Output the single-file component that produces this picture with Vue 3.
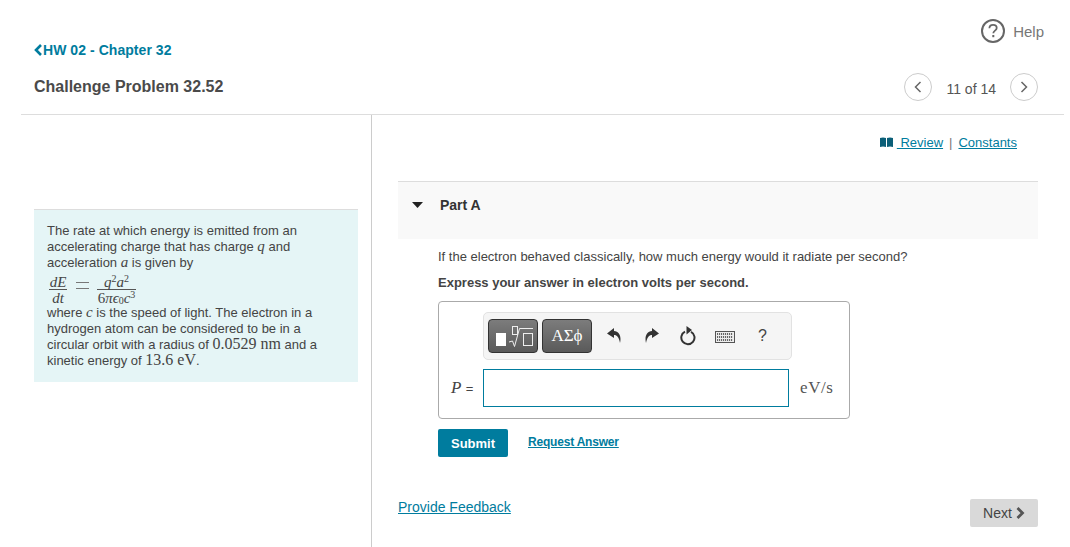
<script setup>
const keyRows = [0, 1, 2]
</script>

<template>
  <div class="page">
    <header class="header">
      <div class="help-row">
        <svg class="help-icon" width="26" height="26" viewBox="0 0 26 26" aria-hidden="true">
          <circle cx="13" cy="13" r="11" fill="none" stroke="#666" stroke-width="2" />
          <path d="M9.4 10.2c0-2.2 1.6-3.4 3.7-3.4s3.6 1.2 3.6 3.1c0 2.7-3.4 2.8-3.4 5.4" fill="none" stroke="#666" stroke-width="1.8" />
          <rect x="12.3" y="17" width="2" height="2.2" fill="#666" />
        </svg>
        <span class="help-text">Help</span>
      </div>
      <a class="back" href="#">
        <svg width="9" height="12" viewBox="0 0 9 12" aria-hidden="true"><path d="M7 1 2 6l5 5" fill="none" stroke="#007c9e" stroke-width="2.6" /></svg>
        <span>HW 02 - Chapter 32</span>
      </a>
      <div class="title-row">
        <h1 class="title">Challenge Problem 32.52</h1>
        <div class="pager">
          <span class="circle">
            <svg width="10" height="14" viewBox="0 0 10 14" aria-hidden="true"><path d="M7.500 2 2.500 7l5 5" fill="none" stroke="#666" stroke-width="1.500" /></svg>
          </span>
          <span class="count">11 of 14</span>
          <span class="circle">
            <svg width="10" height="14" viewBox="0 0 10 14" aria-hidden="true"><path d="M2.500 2l5 5-5 5" fill="none" stroke="#666" stroke-width="1.500" /></svg>
          </span>
        </div>
      </div>
    </header>

    <main class="body">
      <aside class="left">
        <div class="intro">
          <div>The rate at which energy is emitted from an</div>
          <div>accelerating charge that has charge <i class="m">q</i> and</div>
          <div>acceleration <i class="m">a</i> is given by</div>
          <div class="eq">
            <span class="frac small">
              <span class="num"><i>dE</i></span>
              <span class="den"><i>dt</i></span>
            </span>
            <svg class="equals" width="13" height="7" viewBox="0 0 13 7" aria-hidden="true"><path d="M0 .5h13M0 6.500h13" stroke="#777" stroke-width="1" /></svg>
            <span class="frac wide">
              <span class="num"><i>q</i><sup>2</sup><i>a</i><sup>2</sup></span>
              <span class="den">6<i>πϵ</i><sub>0</sub><i>c</i><sup>3</sup></span>
            </span>
          </div>
          <div>where <i class="m">c</i> is the speed of light. The electron in a</div>
          <div>hydrogen atom can be considered to be in a</div>
          <div>circular orbit with a radius of <span class="mn">0.0529 nm</span> and a</div>
          <div>kinetic energy of <span class="mn">13.6 eV</span>.</div>
        </div>
      </aside>

      <section class="right">
        <div class="links">
          <svg class="book" width="13" height="10" viewBox="0 0 13 10" aria-hidden="true">
            <path d="M0 1c2-.8 4-.8 6 0v9c-2-.8-4-.8-6 0zM7 1c2-.8 4-.8 6 0v9c-2-.8-4-.8-6 0z" fill="#0b5f78" />
          </svg>
          <a href="#">&nbsp;Review</a>
          <span class="sep">|</span>
          <a href="#">Constants</a>
        </div>

        <div class="part-head">
          <svg width="11" height="6" viewBox="0 0 11 6" aria-hidden="true"><path d="M0 0h11L5.500 6z" fill="#222" /></svg>
          <span>Part A</span>
        </div>

        <div class="part-body">
          <p class="question">If the electron behaved classically, how much energy would it radiate per second?</p>
          <p class="instruction">Express your answer in electron volts per second.</p>

          <div class="answer">
            <div class="toolbar">
              <span class="tool">
                <svg width="48" height="32" viewBox="0 0 48 32" aria-hidden="true">
                  <rect x="7" y="13" width="10" height="13" fill="#fff" />
                  <rect x="23.500" y="6.500" width="5" height="8" fill="none" stroke="#eee" />
                  <path d="M20 22l3.500-1 2 5.500L30.500 8.500H44" fill="none" stroke="#eee" />
                  <rect x="34.500" y="13.500" width="9" height="12" fill="none" stroke="#eee" />
                </svg>
              </span>
              <span class="tool greek">ΑΣϕ</span>
              <svg class="ico undo" width="14" height="15" viewBox="0 0 14 15" aria-hidden="true"><path d="M7 0 0 5.500 7 10V7c3 0 5 2.500 6 8 1.500-6.500-.5-11.500-6-12z" fill="#333" /></svg>
              <svg class="ico redo" width="14" height="15" viewBox="0 0 14 15" aria-hidden="true"><path d="M7 0l7 5.500L7 10V7c-3 0-5 2.500-6 8C-.5 8.500 1.500 3.500 7 3z" fill="#333" /></svg>
              <svg class="ico reset" width="16" height="20" viewBox="0 0 16 20" aria-hidden="true">
                <path d="M5 5.700a6.600 6.600 0 1 0 6 .1" fill="none" stroke="#333" stroke-width="2" />
                <path d="M6.500 0v8.500L12 4z" fill="#333" />
              </svg>
              <span class="keyboard" aria-hidden="true">
                <span v-for="r in keyRows" :key="r" class="key-row"></span>
              </span>
              <span class="q-mark">?</span>
            </div>

            <div class="input-row">
              <span class="label"><i>P</i> <span class="eqsign">=</span></span>
              <span class="input"></span>
              <span class="unit">eV/s</span>
            </div>
          </div>

          <div class="actions">
            <button class="submit" type="button">Submit</button>
            <a class="request" href="#">Request Answer</a>
          </div>
        </div>

        <div class="footer">
          <a class="feedback" href="#">Provide Feedback</a>
          <button class="next" type="button">
            Next
            <svg width="9" height="12" viewBox="0 0 9 12" aria-hidden="true"><path d="M1.500 1l5 5-5 5" fill="none" stroke="#555" stroke-width="2.800" /></svg>
          </button>
        </div>
      </section>
    </main>
  </div>
</template>

<style scoped>
.page {
  width: 1070px;
  height: 547px;
  overflow: hidden;
  background: #fff;
  font-family: "Liberation Sans", Arial, sans-serif;
  font-size: 14px;
  color: #333;
  box-sizing: border-box;
}
a { color: #007c9e; }
.header {
  height: 115px;
  box-sizing: border-box;
  margin: 0 6px 0 21px;
  padding: 18px 26px 0 13px;
  border-bottom: 1px solid #ddd;
}
.help-row {
  display: flex;
  align-items: center;
  justify-content: flex-end;
  height: 26px;
  margin-right: -6px;
}
.help-icon { margin-right: 7px; }
.help-text { font-size: 15px; color: #777; }
.back {
  display: flex;
  align-items: center;
  height: 16px;
  font-size: 14px;
  font-weight: bold;
  letter-spacing: .05px;
  text-decoration: none;
  color: #007c9e;
  position: relative;
  top: -2px;
}
.title-row {
  display: flex;
  align-items: center;
  justify-content: space-between;
  margin-top: 13px;
}
.title {
  margin: 0;
  font-size: 16px;
  font-weight: bold;
  color: #4a4a4a;
  line-height: 18px;
}
.pager { display: flex; align-items: center; }
.circle {
  width: 26px;
  height: 26px;
  border: 1px solid #ccc;
  border-radius: 50%;
  display: flex;
  align-items: center;
  justify-content: center;
}
.count { margin: 4px 14px 0; color: #555; font-size: 14px; }
.body { display: flex; height: 432px; }
.left {
  width: 351px;
  margin-left: 21px;
  box-sizing: border-box;
  border-right: 1px solid #ccc;
  padding: 94px 13px 0 13px;
  flex: none;
}
.intro {
  background: #e5f5f6;
  border-top: 1px solid #ddd;
  padding: 13px 13px 0;
  height: 173px;
  box-sizing: border-box;
  font-size: 13px;
  line-height: 16px;
  color: #444;
  white-space: nowrap;
}
.m {
  font-family: "Liberation Serif", serif;
  font-size: 15px;
  line-height: 0;
}
.mn {
  font-family: "Liberation Serif", serif;
  font-size: 16px;
  line-height: 0;
}
.eq {
  display: flex;
  align-items: flex-start;
  height: 34px;
  font-family: "Liberation Serif", serif;
  font-size: 15px;
  line-height: 14px;
}
.frac {
  display: flex;
  flex-direction: column;
  align-items: center;
  width: 18px;
  margin-top: 1px;
}
.frac.small { margin-left: 2px; }
.frac.wide { width: 39px; }
.frac sup, .frac sub { font-size: 10px; line-height: 0; }
.frac sup { vertical-align: 5px; }
.frac sub { vertical-align: -1px; }
.num {
  box-sizing: border-box;
  height: 18px;
  border-bottom: 1px solid #555;
  width: 100%;
  text-align: center;
  padding-top: 3px;
}
.den { padding-top: 1px; }
.equals { margin: 11px 8px 0 9px; }
.right {
  width: 640px;
  margin-left: 26px;
  flex: none;
  display: flex;
  flex-direction: column;
}
.links {
  display: flex;
  align-items: center;
  justify-content: flex-end;
  height: 54px;
  margin-bottom: 2px;
  padding: 0 21px 0 0;
  font-size: 13px;
}
.book { margin-right: 4px; }
.sep { margin: 0 6px; color: #777; }
.part-head {
  margin-top: 10px;
  height: 58px;
  box-sizing: border-box;
  border-top: 1px solid #ddd;
  background: #f9f9f9;
  padding: 15px 0 0 14px;
  display: flex;
  align-items: flex-start;
  font-weight: bold;
  line-height: 16px;
  color: #333;
}
.part-head svg { margin: 5px 17px 0 0; }
.part-body { padding: 0 0 0 40px; }
.question {
  margin: 9px 0 0;
  line-height: 17px;
  color: #444;
  font-size: 13px;
}
.instruction {
  margin: 9px 0 0;
  line-height: 17px;
  font-weight: bold;
  color: #444;
  font-size: 13px;
}
.answer {
  width: 412px;
  height: 118px;
  margin-top: 10px;
  box-sizing: border-box;
  border: 1px solid #aaa;
  border-radius: 4px;
  padding: 10px 0 0 44px;
}
.toolbar {
  width: 309px;
  height: 48px;
  box-sizing: border-box;
  background: #f5f5f5;
  border: 1px solid #e2e2e2;
  border-radius: 5px;
  padding: 0 0 1px 4px;
  display: flex;
  align-items: center;
}
.tool {
  width: 50px;
  height: 34px;
  box-sizing: border-box;
  border: 1px solid #333;
  border-radius: 4px;
  background: linear-gradient(#7c7c7c, #5a5a5a);
  color: #fff;
  display: flex;
  align-items: center;
  justify-content: center;
  margin-right: 4px;
}
.greek {
  font-family: "Liberation Serif", serif;
  font-size: 17px;
}
.ico { flex: none; }
.undo { margin-left: 11px; }
.redo { margin-left: 24px; }
.reset { margin-left: 21px; }
.keyboard {
  width: 20px;
  height: 12px;
  box-sizing: border-box;
  margin: 2px 0 0 19px;
  border: 1px solid #555;
  background: #eee;
  padding: 1px;
  display: flex;
  flex-direction: column;
  gap: 1px;
  flex: none;
}
.key-row {
  height: 2px;
  background: repeating-linear-gradient(90deg, #666 0 1px, #ddd 1px 2px);
}
.q-mark { margin-left: 23px; font-size: 16px; color: #444; }
.input-row {
  display: flex;
  align-items: center;
  margin-top: 9px;
  margin-left: -44px;
}
.label {
  width: 44px;
  box-sizing: border-box;
  padding-left: 12px;
  font-family: "Liberation Serif", serif;
  font-size: 17px;
  color: #444;
}
.eqsign { font-family: "Liberation Sans", Arial, sans-serif; font-size: 13px; }
.input {
  width: 306px;
  height: 38px;
  box-sizing: border-box;
  border: 1px solid #007c9e;
  background: #fff;
}
.unit {
  margin-left: 11px;
  font-family: "Liberation Serif", serif;
  font-size: 17px;
  letter-spacing: .6px;
  color: #555;
}
.actions {
  display: flex;
  align-items: center;
  margin-top: 10px;
}
.submit {
  width: 70px;
  height: 28px;
  border: 0;
  border-radius: 2px;
  background: #007c9e;
  color: #fff;
  font-family: "Liberation Sans", Arial, sans-serif;
  font-size: 13px;
  font-weight: bold;
  padding: 0;
}
.request {
  margin: -3px 0 0 20px;
  font-size: 12px;
  font-weight: bold;
  letter-spacing: -.2px;
}
.footer {
  display: flex;
  align-items: flex-start;
  justify-content: space-between;
  margin-top: 42px;
}
.feedback { font-size: 14px; }
.next {
  width: 68px;
  height: 28px;
  border: 0;
  border-radius: 2px;
  background: #d9d9d9;
  color: #444;
  font-family: "Liberation Sans", Arial, sans-serif;
  font-size: 14px;
  padding: 0;
  display: flex;
  align-items: center;
  justify-content: center;
  gap: 4px;
}
</style>

<style>
html, body { margin: 0; overflow: hidden; background: #fff; }
</style>
